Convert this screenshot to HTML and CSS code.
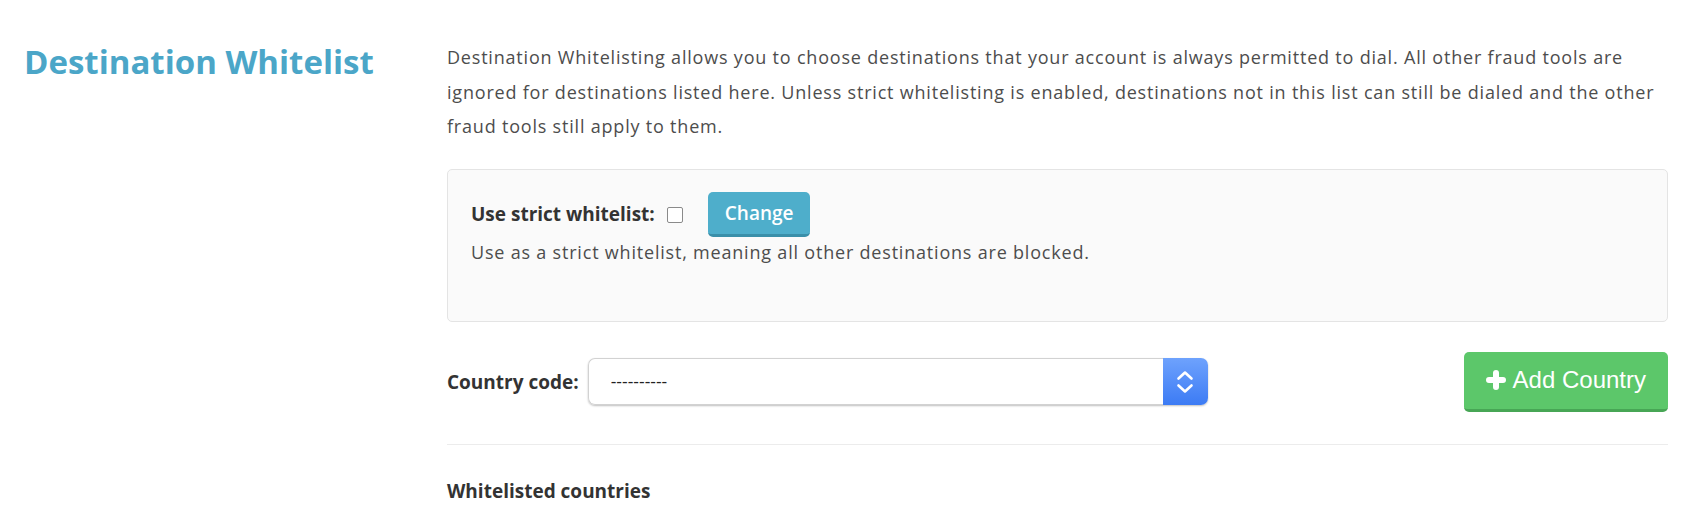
FILE: index.html
```html
<!DOCTYPE html>
<html lang="en">
<head>
    <meta charset="UTF-8">
    <meta name="viewport" content="width=device-width, initial-scale=1.0">
    <title>Destination Whitelist</title>
    <link rel="stylesheet" href="styles.css">
</head>
<body>
    <div class="page">
        <div class="side">
            <h1>Destination Whitelist</h1>
        </div>

        <div class="main">
            <p class="intro">Destination Whitelisting allows you to choose destinations that your account is always permitted to dial. All other fraud tools are ignored for destinations listed here. Unless strict whitelisting is enabled, destinations not in this list can still be dialed and the other fraud tools still apply to them.</p>

            <div class="panel">
                <div class="strict-row">
                    <label for="strict" class="strict-label">Use strict whitelist:</label>
                    <input type="checkbox" id="strict" class="check">
                    <button class="btn btn-change">Change</button>
                </div>
                <div class="help">Use as a strict whitelist, meaning all other destinations are blocked.</div>
            </div>

            <div class="country-row">
                <label for="country_code" class="country-label">Country code:</label>
                <div class="select-wrap">
                    <select id="country_code" class="select">
                        <option>----------</option>
                    </select>
                    <span class="stepper">
                        <svg width="18" height="26" viewBox="0 0 18 26">
                            <path d="M2.5 9.5 L9 3.5 L15.5 9.5" fill="none" stroke="#fff" stroke-width="2.6" stroke-linecap="round" stroke-linejoin="round"/>
                            <path d="M2.5 16.5 L9 22.5 L15.5 16.5" fill="none" stroke="#fff" stroke-width="2.6" stroke-linecap="round" stroke-linejoin="round"/>
                        </svg>
                    </span>
                </div>
                <button class="btn btn-add">
                    <svg class="plus" width="20" height="20" viewBox="0 0 20 20">
                        <path d="M10 3 V17 M3 10 H17" stroke="#fff" stroke-width="6" stroke-linecap="round"/>
                    </svg>
                    Add Country
                </button>
            </div>

            <hr class="divider">

            <h4 class="list-title">Whitelisted countries</h4>
        </div>
    </div>
</body>
</html>
```

FILE: styles.css
```css
body {
    font-family: 'Open Sans', 'Liberation Sans', sans-serif;
    background-color: #fff;
    color: #4d4d4d;
    margin: 0;
}

.page {
    display: flex;
    padding: 0 38px 0 24px;
}

.side {
    width: 423px;
    flex-shrink: 0;
    padding-top: 39px;
}

h1 {
    margin: 0;
    font-size: 33px;
    font-weight: 700;
    line-height: 45px;
    color: #4ba6c8;
}

.main {
    flex: 1;
    padding-top: 40px;
}

.intro {
    margin: 0;
    font-size: 18px;
    letter-spacing: 0.8px;
    line-height: 34.5px;
}

.panel {
    margin-top: 25px;
    padding: 22px 23px 57px;
    background-color: #fafafa;
    border: 1px solid #e4e4e4;
    border-radius: 5px;
}

.strict-row {
    display: flex;
    align-items: center;
}

.strict-label,
.country-label,
.list-title {
    font-size: 19px;
    font-weight: 700;
    color: #333;
}

.check {
    appearance: none;
    -webkit-appearance: none;
    width: 16px;
    height: 16px;
    margin: 2px 0 0 12px;
    background-color: #fff;
    border: 1px solid #8a8a8a;
    border-radius: 2px;
}

.btn {
    border: none;
    color: #fff;
    cursor: pointer;
    font-family: inherit;
}

.btn-change {
    margin-left: 25px;
    height: 45px;
    padding: 0 17px;
    font-size: 19px;
    font-weight: 600;
    background-color: #4eaecb;
    border-bottom: 3px solid #3a8fa9;
    border-radius: 5px;
}

.help {
    margin-top: 3px;
    font-size: 18px;
    letter-spacing: 0.8px;
    line-height: 24px;
}

.country-row {
    display: flex;
    align-items: center;
    margin-top: 30px;
}

.country-label {
    margin-right: 9px;
}

.select-wrap {
    display: flex;
    width: 620px;
    height: 47px;
    border-radius: 7px;
    box-shadow: 0 1px 2px rgba(0, 0, 0, 0.25);
}

.select {
    appearance: none;
    -webkit-appearance: none;
    flex: 1;
    height: 100%;
    padding: 0 22px;
    font-family: 'Liberation Sans', sans-serif;
    font-size: 17px;
    color: #222;
    background-color: #fff;
    border: 1px solid #d2d2d2;
    border-right: none;
    border-radius: 7px 0 0 7px;
}

.stepper {
    display: flex;
    align-items: center;
    justify-content: center;
    width: 45px;
    background: linear-gradient(#6ea2fd, #3c7bf4);
    border-radius: 0 7px 7px 0;
}

.btn-add {
    margin-left: auto;
    display: flex;
    align-items: center;
    height: 60px;
    padding: 0 22px;
    font-family: 'Liberation Sans', sans-serif;
    font-size: 24px;
    background-color: #5cc76a;
    border-bottom: 3px solid #47a655;
    border-radius: 5px;
}

.plus {
    margin-right: 7px;
}

.divider {
    margin: 32px 0 0;
    border: none;
    border-top: 1px solid #ececec;
}

.list-title {
    margin: 34px 0 0;
    line-height: 24px;
}
```
